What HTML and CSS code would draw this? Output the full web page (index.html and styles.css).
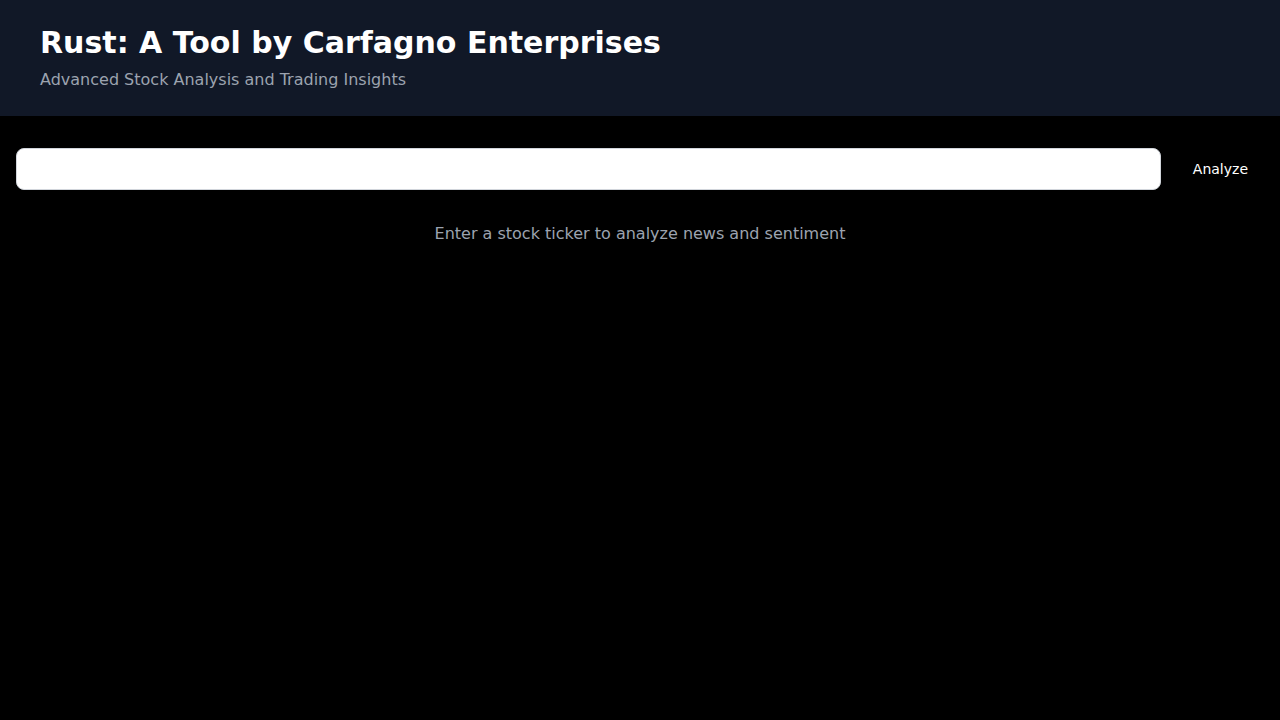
FILE: index.html
```html
<!DOCTYPE html>
<html lang="en">
<head>
<meta charset="utf-8">
<title>Rust: A Tool by Carfagno Enterprises</title>
<link rel="stylesheet" href="styles.css">
</head>
<body>
<header class="header">
  <h1 class="title">Rust: A Tool by Carfagno Enterprises</h1>
  <p class="subtitle">Advanced Stock Analysis and Trading Insights</p>
</header>
<main class="main">
  <form class="search">
    <input class="search-input" type="text" aria-label="Stock ticker">
    <button class="search-button" type="button">Analyze</button>
  </form>
  <p class="hint">Enter a stock ticker to analyze news and sentiment</p>
</main>
</body>
</html>
```

FILE: styles.css
```css
* { box-sizing: border-box; }
html, body {
  margin: 0;
  background: #000;
  font-family: "DejaVu Sans", sans-serif;
  color: #fff;
}
.header {
  background: #111827;
  padding: 25px 40px 24px;
  height: 116px;
}
.title {
  margin: 0 0 7px;
  font-size: 30px;
  line-height: 36px;
  font-weight: 700;
  color: #fff;
}
.subtitle {
  margin: 0;
  font-size: 16px;
  line-height: 24px;
  color: #9ca3af;
}
.main {
  padding: 32px 16px;
}
.search {
  display: flex;
  gap: 16px;
  align-items: center;
}
.search-input {
  flex: 1;
  height: 42px;
  border: 1px solid #d1d5db;
  border-radius: 8px;
  background: #fff;
  padding: 0 12px;
  font-family: inherit;
  font-size: 16px;
}
.search-button {
  background: transparent;
  border: none;
  color: #fff;
  font-family: inherit;
  font-size: 14px;
  line-height: 20px;
  padding: 11px 16px;
}
.hint {
  margin: 32px 0 0;
  text-align: center;
  font-size: 16px;
  line-height: 24px;
  color: #9ca3af;
}
```
